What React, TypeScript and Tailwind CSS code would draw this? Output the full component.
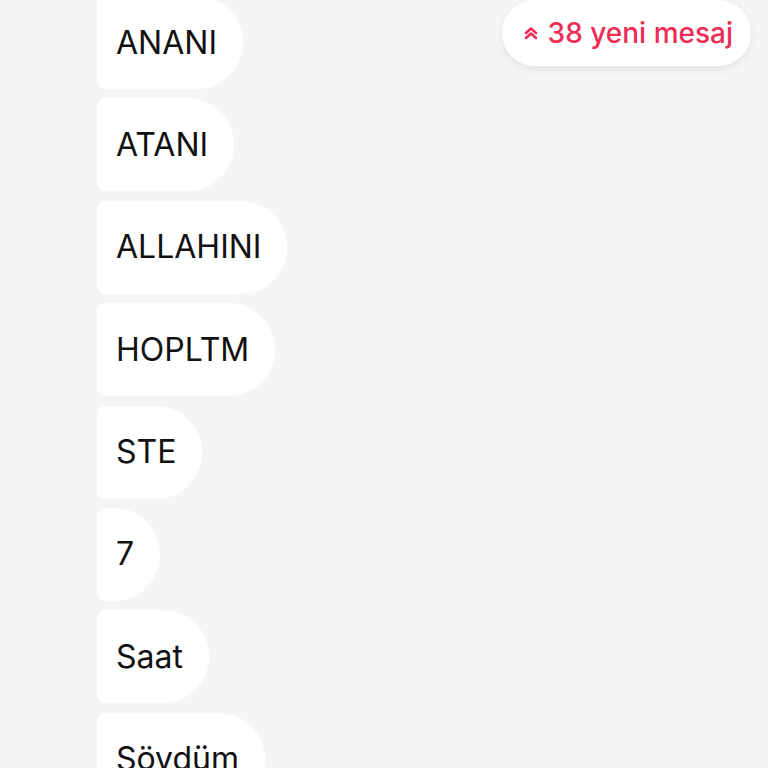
const messages = ["ANANI", "ATANI", "ALLAHINI", "HOPLTM", "STE", "7", "Saat", "Söydüm"];

function DoubleChevronUp() {
  return (
    <svg width="14" height="14" viewBox="0 0 14 14" fill="none" stroke="currentColor" strokeWidth="2.6" strokeLinecap="round" strokeLinejoin="round">
      <polyline points="2,7 7,2.5 12,7" />
      <polyline points="2,12 7,7.5 12,12" />
    </svg>
  );
}

export default function App() {
  return (
    <div className="relative w-[768px] h-[768px] overflow-hidden bg-[#f5f5f5] font-['Inter','Noto_Sans',sans-serif]">
      {/* Message list */}
      <div className="flex flex-col items-start gap-[9.4px] pl-[97px] -mt-[4px]">
        {messages.map((m) => (
          <div
            key={m}
            className="flex items-center h-[93px] shrink-0 bg-white rounded-l-[8px] rounded-r-[46px] pl-[19px] pr-[26px] text-[32px] text-[#111111] leading-none"
          >
            {m}
          </div>
        ))}
      </div>

      {/* New messages pill */}
      <div className="absolute top-0 right-[17px] flex items-center gap-[10px] h-[66px] pl-[22px] pr-[18px] rounded-full bg-white shadow-[0_3px_10px_rgba(0,0,0,0.08)] text-[#ee2c56]">
        <DoubleChevronUp />
        <span className="text-[28px] leading-none font-medium">38 yeni mesaj</span>
      </div>
    </div>
  );
}
